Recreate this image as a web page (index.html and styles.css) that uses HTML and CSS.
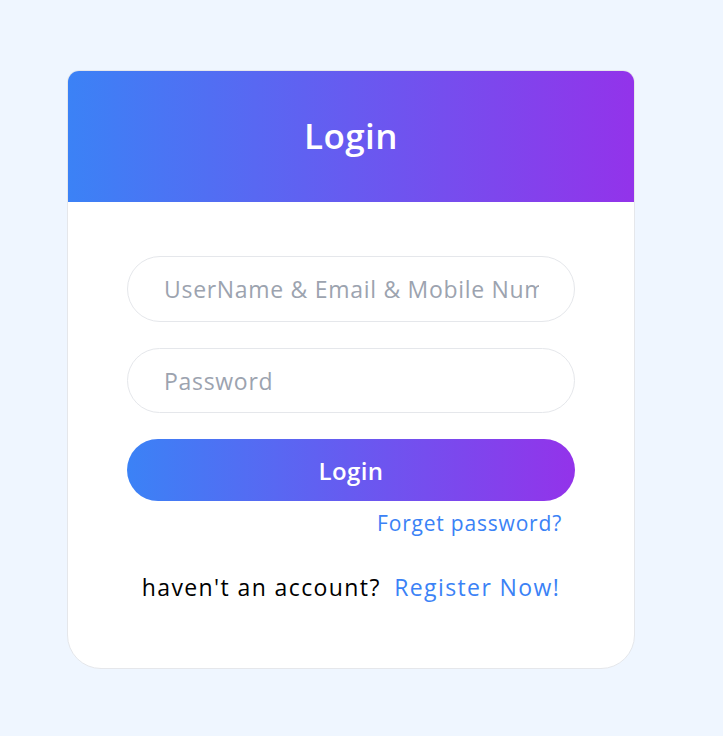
FILE: index.html
```html
<!DOCTYPE html>
<html>
<head>
<meta charset="utf-8">
<link rel="stylesheet" href="styles.css">
</head>
<body>
<div class="card">
  <div class="card-header"><h1 class="title">Login</h1></div>
  <form class="form">
    <input class="field" type="text" placeholder="UserName &amp; Email &amp; Mobile Number">
    <input class="field" type="password" placeholder="Password">
    <button class="btn" type="button">Login</button>
    <a class="forgot" href="#">Forget password?</a>
    <p class="register">haven't an account? <a class="link" href="#">Register Now!</a></p>
  </form>
</div>
</body>
</html>
```
FILE: styles.css
```css
html, body {
  margin: 0;
  padding: 0;
}
body {
  background: #eff6ff;
  font-family: "Open Sans", "Liberation Sans", sans-serif;
  padding: 70px 0 0 67px;
  height: 736px;
  box-sizing: border-box;
}
.card {
  width: 568px;
  box-sizing: border-box;
  background: #fff;
  border: 1px solid #e5e7eb;
  border-radius: 12px 12px 34px 34px;
  overflow: hidden;
}
.card-header {
  height: 132px;
  margin: -1px -1px 0 -1px;
  background: linear-gradient(90deg, #3b82f6, #9333ea);
  display: flex;
  align-items: center;
  justify-content: center;
}
.title {
  margin: 0 0 2px 0;
  color: #fff;
  font-size: 35px;
  font-weight: 600;
  letter-spacing: 0.4px;
  line-height: 1;
}
.form {
  display: flex;
  flex-direction: column;
  padding: 54px 59px 0 59px;
  height: 466px;
  box-sizing: border-box;
}
.field {
  height: 66px;
  box-sizing: border-box;
  border: 1px solid #e5e7eb;
  border-radius: 33px;
  padding: 0 35px 0 36px;
  font-family: inherit;
  font-size: 23px;
  letter-spacing: 0.7px;
  color: #111;
  outline: none;
  margin-bottom: 26px;
  background: #fff;
}
.field + .field {
  height: 65px;
}
.field::placeholder {
  color: #9ca3af;
}
.btn {
  height: 62px;
  border: none;
  border-radius: 31px;
  background: linear-gradient(90deg, #3b82f6, #9333ea);
  color: #fff;
  font-family: inherit;
  font-size: 24px;
  font-weight: 600;
  letter-spacing: 0.4px;
}
.forgot {
  align-self: flex-end;
  margin: 7px 13px 0 0;
  color: #3b82f6;
  text-decoration: none;
  font-size: 21px;
  letter-spacing: 0.8px;
  line-height: 30px;
}
.register {
  margin: 33px 0 0 0;
  text-align: center;
  font-size: 23px;
  letter-spacing: 1.4px;
  color: #000;
  line-height: 32px;
}
.link {
  color: #3b82f6;
  text-decoration: none;
  margin-left: 6px;
}
```
